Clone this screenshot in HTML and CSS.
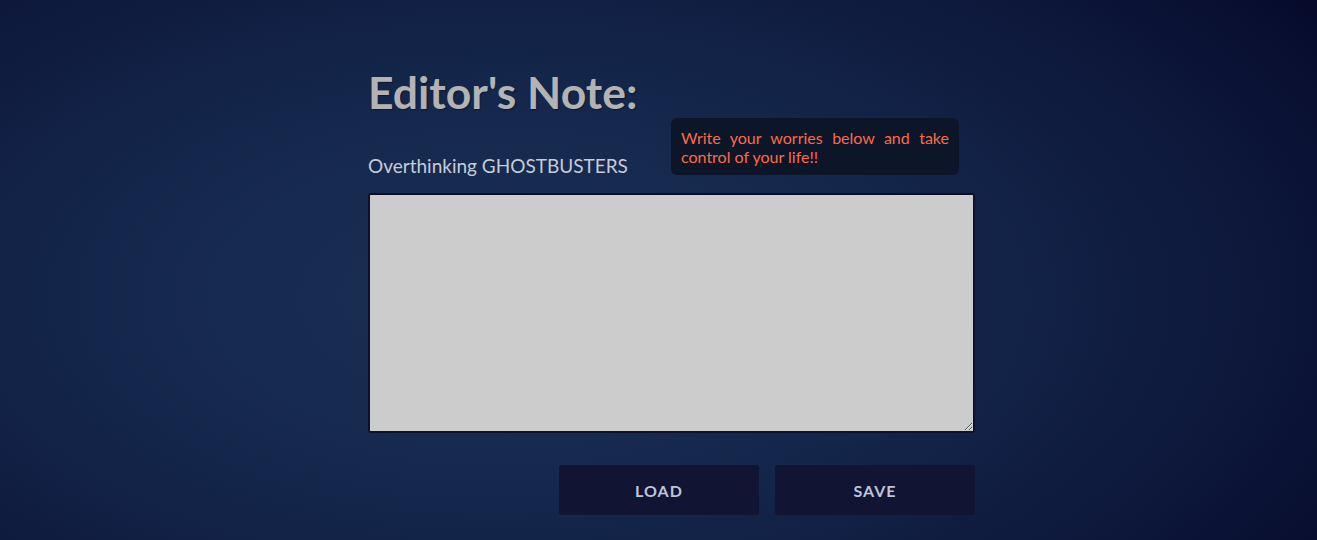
FILE: index.html
```html
<!DOCTYPE html>
<html lang="en">
<head>
<meta charset="utf-8">
<title>Editor's Note</title>
<link rel="stylesheet" href="styles.css">
</head>
<body>
<main class="editor">
  <h1 class="title">Editor's Note:</h1>
  <div class="label-row">
    <label class="label" for="note">Overthinking GHOSTBUSTERS</label>
    <div class="tooltip">Write your worries below and take control of your life!!</div>
  </div>
  <textarea id="note" class="note" autofocus></textarea>
  <div class="actions">
    <button class="btn">LOAD</button>
    <button class="btn">SAVE</button>
  </div>
</main>
</body>
</html>
```
FILE: styles.css
```css
html, body {
  margin: 0;
  height: 100%;
}
body {
  background: radial-gradient(ellipse 75% 95% at 38% 55%, #1b3156 0%, #14254a 45%, #0c1639 80%, #060b2c 100%);
  font-family: Lato, "Open Sans", sans-serif;
  overflow: hidden;
}
.editor {
  width: 607px;
  margin-left: 368px;
  padding-top: 66px;
  display: flex;
  flex-direction: column;
}
.title {
  margin: 0;
  font-size: 44.5px;
  line-height: 52px;
  font-weight: 700;
  color: #b3b3b3;
  text-shadow: 1px 1px 1px rgba(0,0,0,0.35);
}
.label-row {
  position: relative;
  box-sizing: border-box;
  margin-top: 35px;
  height: 40px;
  padding-top: 2px;
}
.label {
  font-size: 19px;
  line-height: 22px;
  color: #c6ccd8;
}
.tooltip {
  position: absolute;
  left: 303px;
  top: -35px;
  width: 268px;
  padding: 10px 10px 9px;
  background: #0c1628;
  border-radius: 6px;
  color: #ff6a45;
  font-size: 16px;
  line-height: 19px;
  text-align: justify;
}
.note {
  display: block;
  box-sizing: border-box;
  width: 607px;
  height: 240px;
  margin: 0;
  padding: 8px;
  background: #cccccc;
  border: 2px solid #0e1030;
  border-top-color: #0b0c28;
  border-radius: 3px;
  font-family: Lato, sans-serif;
  font-size: 16px;
  color: #111;
  caret-color: #111;
  resize: both;
  outline: none;
}
.actions {
  display: flex;
  justify-content: flex-end;
  gap: 16px;
  margin-top: 32px;
}
.btn {
  width: 200px;
  height: 50px;
  border: none;
  border-radius: 3px;
  background: #111433;
  color: #bcc6d8;
  font-family: Lato, sans-serif;
  font-weight: 700;
  font-size: 16px;
  letter-spacing: 1px;
}
```
